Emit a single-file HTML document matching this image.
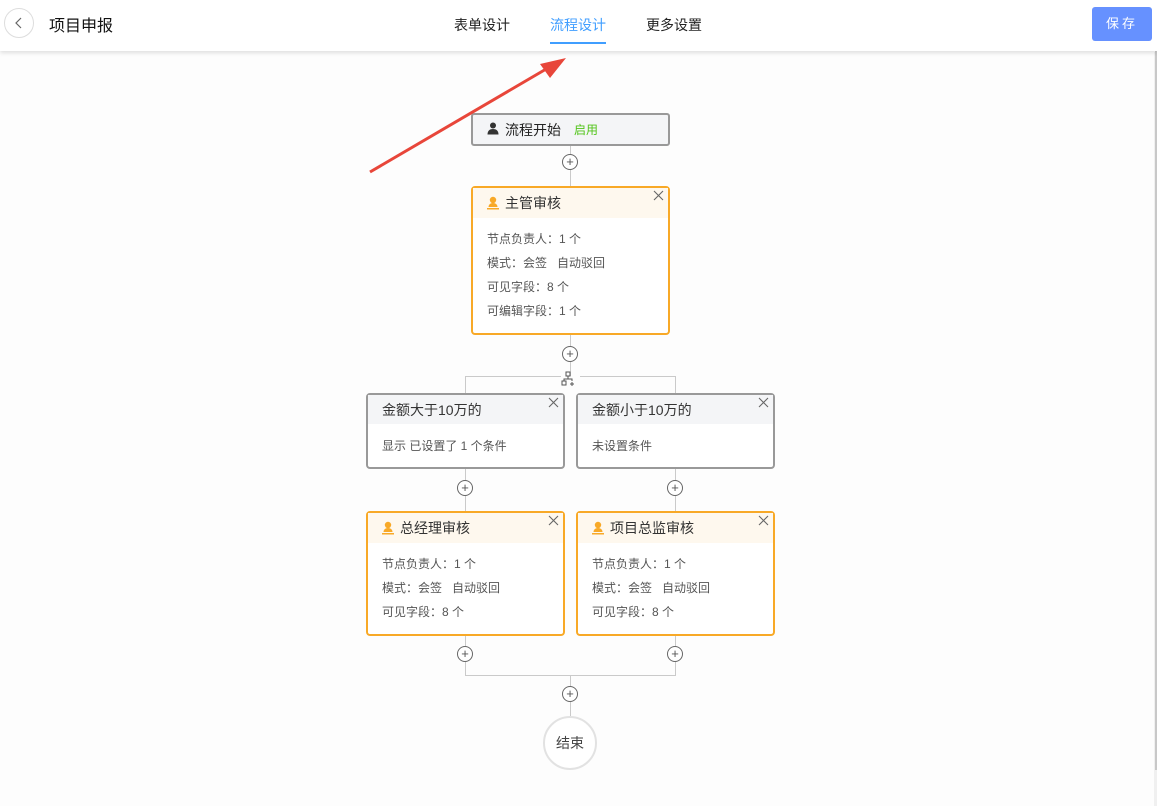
<!DOCTYPE html>
<html><head><meta charset="utf-8"><style>
*{margin:0;padding:0;box-sizing:border-box}
body{width:1157px;height:806px;background:#fdfdfd;font-family:"Liberation Sans","Noto Sans CJK SC",sans-serif;position:relative;overflow:hidden;color:#333}
.a{position:absolute}
.hdr{left:0;top:0;width:1157px;height:51px;background:#fff;box-shadow:0 2px 4px rgba(0,0,0,.12);z-index:2}
.tab{top:15px;font-size:14px;color:#222}
.ln{position:absolute;background:#cacaca}
.plus{position:absolute;width:16px;height:16px;border:1.3px solid #666;border-radius:50%;background:#fff;font-size:13px;line-height:13px;text-align:center;color:#555}
.node{position:absolute;width:199px;border:2px solid #f8a927;border-radius:4px;background:#fff}
.node .h{height:30px;background:#fef8ee;font-size:14px;line-height:30px;padding-left:14px;color:#333}
.node .r{font-size:12px;color:#555;padding-left:14px;height:24px;line-height:24px}
.cond{position:absolute;width:199px;height:76px;border:2px solid #999;border-radius:4px;background:#fff}
.cond .h{height:29px;background:#f4f5f7;font-size:14px;line-height:30px;padding-left:14px;color:#333}
.cond .b{font-size:12px;color:#555;padding-left:14px;line-height:44px}
.x{position:absolute;right:4px;top:2px}
.ic{display:inline-block;vertical-align:-2px;margin-right:6px}
</style></head><body>
<svg width="0" height="0" style="position:absolute"><defs>
<g id="u"><circle cx="6" cy="4" r="3.2" fill="#f8a927"/><path d="M1.5 11c0-2.5 2-4 4.5-4s4.5 1.5 4.5 4z" fill="#f8a927"/><rect x="0" y="12" width="12" height="1.5" fill="#f8a927"/></g>
<g id="xx"><path d="M1 1L10 10M10 1L1 10" stroke="#666" stroke-width="1.1" fill="none"/></g>
</defs></svg>
<div class="a hdr">
 <div class="a" style="left:4px;top:8px;width:30px;height:30px;border:1px solid #ddd;border-radius:50%"></div>
 <svg class="a" style="left:13px;top:16px" width="12" height="14"><path d="M8 2 L3 7 L8 12" fill="none" stroke="#666" stroke-width="1.2"/></svg>
 <div class="a" style="left:49px;top:12px;font-size:16px;color:#111">项目申报</div>
 <div class="a tab" style="left:454px">表单设计</div>
 <div class="a tab" style="left:550px;color:#409eff">流程设计</div>
 <div class="a" style="left:550px;top:42px;width:56px;height:2px;background:#409eff"></div>
 <div class="a tab" style="left:646px">更多设置</div>
 <div class="a" style="left:1092px;top:7px;width:60px;height:34px;background:#6691ff;border-radius:3px;color:#fff;font-size:13px;text-align:center;line-height:34px;letter-spacing:3px">保存</div>
</div>
<div class="a" style="left:1154px;top:52px;width:3px;height:754px;background:#f0f0f0"></div>
<div class="a" style="left:1155px;top:45px;width:2px;height:725px;background:#c8c8c8"></div>

<div class="ln" style="left:570px;top:145px;width:1px;height:42px"></div>
<div class="ln" style="left:570px;top:334px;width:1px;height:42px"></div>
<div class="ln" style="left:465px;top:376px;width:96px;height:1px"></div>
<div class="ln" style="left:580px;top:376px;width:96px;height:1px"></div>
<div class="ln" style="left:465px;top:376px;width:1px;height:18px"></div>
<div class="ln" style="left:675px;top:376px;width:1px;height:18px"></div>
<div class="ln" style="left:465px;top:468px;width:1px;height:44px"></div>
<div class="ln" style="left:675px;top:468px;width:1px;height:44px"></div>
<div class="ln" style="left:465px;top:634px;width:1px;height:42px"></div>
<div class="ln" style="left:675px;top:634px;width:1px;height:42px"></div>
<div class="ln" style="left:465px;top:675px;width:211px;height:1px"></div>
<div class="ln" style="left:570px;top:675px;width:1px;height:42px"></div>

<div class="plus" style="left:562px;top:154px">+</div>
<div class="plus" style="left:562px;top:346px">+</div>
<div class="plus" style="left:457px;top:480px">+</div>
<div class="plus" style="left:667px;top:480px">+</div>
<div class="plus" style="left:457px;top:646px">+</div>
<div class="plus" style="left:667px;top:646px">+</div>
<div class="plus" style="left:562px;top:686px">+</div>

<svg class="a" style="left:561px;top:371px" width="18" height="16"><rect x="5" y="1" width="4" height="4" fill="none" stroke="#555"/><rect x="1" y="10" width="4" height="4" fill="none" stroke="#555"/><path d="M7 5v3M3 10V8h8v2" fill="none" stroke="#555"/><path d="M11 11v4M9 13h4" stroke="#555"/></svg>

<div class="a" style="left:471px;top:113px;width:199px;height:33px;background:#f4f5f7;border:2px solid #999;border-radius:3px"></div>
<svg class="a" style="left:487px;top:122px" width="12" height="13"><circle cx="6" cy="3.5" r="3" fill="#333"/><path d="M0.5 12.5c0-4 2.5-5.5 5.5-5.5s5.5 1.5 5.5 5.5z" fill="#333"/></svg>
<div class="a" style="left:505px;top:120px;font-size:14px;color:#222">流程开始</div>
<div class="a" style="left:574px;top:121px;font-size:12px;color:#52c41a">启用</div>

<div class="node" style="left:471px;top:186px;height:149px">
 <div class="h"><svg class="ic" width="12" height="14"><use href="#u"/></svg>主管审核</div><svg class="x" width="11" height="11"><use href="#xx"/></svg>
 <div style="height:9px"></div>
 <div class="r">节点负责人：1 个</div><div class="r">模式：会签 &nbsp; 自动驳回</div><div class="r">可见字段：8 个</div><div class="r">可编辑字段：1 个</div>
</div>

<div class="cond" style="left:366px;top:393px"><div class="h">金额大于10万的</div><svg class="x" width="11" height="11"><use href="#xx"/></svg><div class="b">显示 已设置了 1 个条件</div></div>
<div class="cond" style="left:576px;top:393px"><div class="h">金额小于10万的</div><svg class="x" width="11" height="11"><use href="#xx"/></svg><div class="b">未设置条件</div></div>

<div class="node" style="left:366px;top:511px;height:125px">
 <div class="h"><svg class="ic" width="12" height="14"><use href="#u"/></svg>总经理审核</div><svg class="x" width="11" height="11"><use href="#xx"/></svg>
 <div style="height:9px"></div>
 <div class="r">节点负责人：1 个</div><div class="r">模式：会签 &nbsp; 自动驳回</div><div class="r">可见字段：8 个</div>
</div>
<div class="node" style="left:576px;top:511px;height:125px">
 <div class="h"><svg class="ic" width="12" height="14"><use href="#u"/></svg>项目总监审核</div><svg class="x" width="11" height="11"><use href="#xx"/></svg>
 <div style="height:9px"></div>
 <div class="r">节点负责人：1 个</div><div class="r">模式：会签 &nbsp; 自动驳回</div><div class="r">可见字段：8 个</div>
</div>

<div class="a" style="left:543px;top:716px;width:54px;height:54px;border:2px solid #e2e2e2;border-radius:50%;background:#fff;text-align:center;line-height:50px;font-size:14px;color:#444">结束</div>

<svg class="a" style="left:0;top:0;z-index:3" width="1157" height="806"><line x1="370" y1="172" x2="553" y2="65" stroke="#e8463a" stroke-width="3"/><polygon points="566,58 540,64 550,78" fill="#e8463a"/></svg>
</body></html>
